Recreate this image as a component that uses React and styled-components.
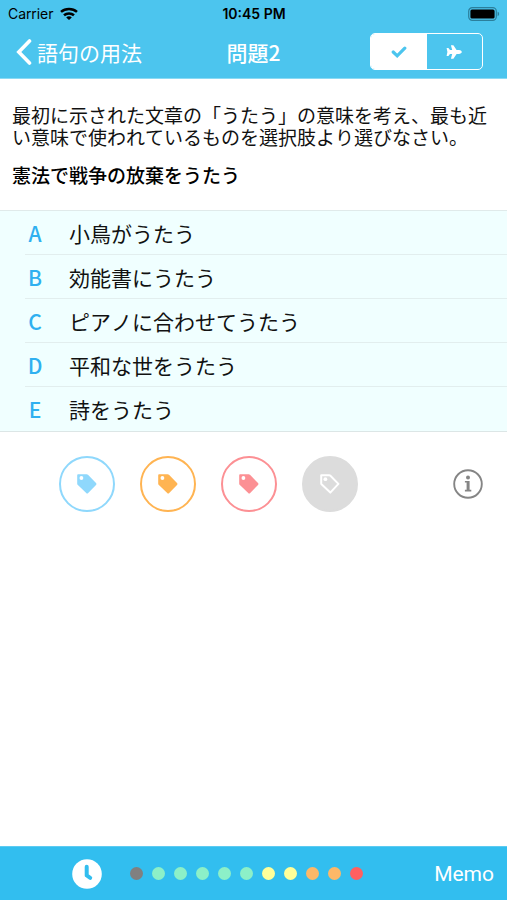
import React, { useState } from 'react';
import styled, { createGlobalStyle } from 'styled-components';

const options = [
  { letter: 'A', text: '小鳥がうたう' },
  { letter: 'B', text: '効能書にうたう' },
  { letter: 'C', text: 'ピアノに合わせてうたう' },
  { letter: 'D', text: '平和な世をうたう' },
  { letter: 'E', text: '詩をうたう' },
];

const tags = [
  { name: 'blue', color: '#8fd8fc' },
  { name: 'orange', color: '#ffb452' },
  { name: 'red', color: '#fc9094' },
];

const progress = [
  '#808080',
  '#8cf0c8',
  '#8cf0c8',
  '#8cf0c8',
  '#8cf0c8',
  '#8cf0c8',
  '#ffff99',
  '#ffff99',
  '#fcb868',
  '#fcb868',
  '#ff6060',
];

const WifiIcon = () => (
  <svg width="18" height="14" viewBox="0 0 18 14" fill="none" stroke="#000" strokeWidth="2.5">
    <path d="M1 4.9C5.4 0.9 12.6 0.9 17 4.9" />
    <path d="M4 8.3C6.8 5.8 11.2 5.8 14 8.3" />
    <path d="M9 13L6.2 10.4C7.8 9 10.2 9 11.8 10.4Z" fill="#000" stroke="none" />
  </svg>
);

const BatteryIcon = () => (
  <svg width="32" height="14" viewBox="0 0 32 14">
    <rect x="0.7" y="0.7" width="27.6" height="12.6" rx="3.6" fill="none" stroke="#2b7f9c" strokeWidth="1.2" />
    <rect x="2.4" y="2.4" width="24.2" height="9.2" rx="1.6" fill="#000" />
    <path d="M29.6 4.8C31.6 5.4 31.6 8.6 29.6 9.2Z" fill="#2b7f9c" />
  </svg>
);

const BackIcon = () => (
  <svg width="16" height="26" viewBox="0 0 16 26" fill="none" stroke="#fff" strokeWidth="3.6" strokeLinecap="round">
    <path d="M13.5 2L2.8 13L13.5 24" />
  </svg>
);

const CheckIcon = () => (
  <svg width="16" height="12" viewBox="0 0 16 12" fill="none" stroke="#4cc5ee" strokeWidth="3.2" strokeLinecap="round">
    <path d="M2.2 6L6.2 9.8L13.8 2.2" />
  </svg>
);

const PlaneIcon = () => (
  <svg width="16" height="14" viewBox="0 0 16 14" fill="#fff">
    <path d="M15.8 7C15.8 8 14.4 8.9 13 8.9H10.6L7.4 13.8H4.9L6.2 8.9H4L2.4 10.9H0.6L1.4 7L0.6 3.1H2.4L4 5.1H6.2L4.9 0.2H7.4L10.6 5.1H13C14.4 5.1 15.8 6 15.8 7Z" />
  </svg>
);

const TagIcon = ({ color }) => (
  <svg width="20" height="20" viewBox="0 0 20 20">
    <path
      d="M1.3 0.2H9.6C10.2 0.2 10.6 0.4 11 0.8L19 9C19.6 9.6 19.6 10.3 19 10.9L11.2 19C10.6 19.7 9.8 19.7 9.2 19L0.9 11.1C0.4 10.7 0.2 10.3 0.2 9.7V1.3C0.2 0.6 0.6 0.2 1.3 0.2Z"
      fill={color}
    />
    <circle cx="4.4" cy="4" r="1.9" fill="#fff" />
  </svg>
);

const TagOutlineIcon = () => (
  <svg width="20" height="20" viewBox="0 0 20 20" fill="none" stroke="#fff" strokeWidth="2" strokeLinejoin="round">
    <path d="M1.2 1.2H9.2C9.7 1.2 10 1.3 10.4 1.7L18.4 9.9L10.3 18.6L1.8 10.6C1.4 10.2 1.2 9.9 1.2 9.4Z" />
    <circle cx="5.4" cy="5.2" r="1.9" fill="#fff" stroke="none" />
  </svg>
);

const InfoIcon = () => (
  <svg width="30" height="30" viewBox="0 0 30 30">
    <circle cx="15" cy="15" r="13.8" fill="none" stroke="#858585" strokeWidth="1.9" />
    <circle cx="15" cy="8.6" r="2" fill="#858585" />
    <path d="M11.9 12H16.6V20.7H18.3V22.4H11.9V20.7H13.6V13.6H11.9Z" fill="#858585" />
  </svg>
);

const ClockIcon = () => (
  <svg width="30" height="30" viewBox="0 0 30 30">
    <circle cx="15" cy="15" r="14.8" fill="#fff" />
    <path
      d="M14.7 7.8V16.4L18.2 18.8"
      fill="none"
      stroke="#32beef"
      strokeWidth="4"
      strokeLinecap="round"
      strokeLinejoin="round"
    />
  </svg>
);

const App = () => {
  const [mode, setMode] = useState('check');

  return (
    <Page>
      <GlobalStyle />
      <Header>
        <StatusBar>
          <Carrier>
            Carrier
            <WifiIcon />
          </Carrier>
          <Time>10:45 PM</Time>
          <Battery>
            <BatteryIcon />
          </Battery>
        </StatusBar>
        <NavBar>
          <BackButton>
            <BackIcon />
            語句の用法
          </BackButton>
          <Title>問題2</Title>
          <Segments>
            <Segment aria-label="Check" $active={mode === 'check'} onClick={() => setMode('check')}>
              <CheckIcon />
            </Segment>
            <Segment aria-label="Plane" $active={mode === 'plane'} onClick={() => setMode('plane')}>
              <PlaneIcon />
            </Segment>
          </Segments>
        </NavBar>
      </Header>

      <Question>
        <Instruction>
          最初に示された文章の「うたう」の意味を考え、最も近い意味で使われているものを選択肢より選びなさい。
        </Instruction>
        <Sentence>憲法で戦争の放棄をうたう</Sentence>
      </Question>

      <OptionList>
        {options.map((option) => (
          <OptionItem key={option.letter}>
            <OptionButton>
              <Letter>{option.letter}</Letter>
              {option.text}
            </OptionButton>
          </OptionItem>
        ))}
      </OptionList>

      <TagRow>
        {tags.map((tag) => (
          <TagButton key={tag.name} aria-label={tag.name} $border={tag.color} $fill="#fff">
            <TagIcon color={tag.color} />
          </TagButton>
        ))}
        <TagButton aria-label="none" $border="#dcdcdc" $fill="#dcdcdc">
          <TagOutlineIcon />
        </TagButton>
        <InfoButton aria-label="Info">
          <InfoIcon />
        </InfoButton>
      </TagRow>

      <Footer>
        <ClockButton aria-label="Clock">
          <ClockIcon />
        </ClockButton>
        <Dots>
          {progress.map((color, index) => (
            <Dot key={index} $color={color} />
          ))}
        </Dots>
        <MemoButton>Memo</MemoButton>
      </Footer>
    </Page>
  );
};

const GlobalStyle = createGlobalStyle`
  * {
    box-sizing: border-box;
  }

  body {
    margin: 0;
    background: #fff;
    color: #111;
    font-family: 'Noto Sans CJK JP', sans-serif;
    font-kerning: none;
  }

  button {
    padding: 0;
    border: none;
    background: none;
    color: inherit;
    font: inherit;
    font-kerning: inherit;
    cursor: pointer;
  }

  svg {
    display: block;
  }
`;

const Page = styled.div`
  display: flex;
  flex-direction: column;
  min-height: 100vh;
`;

const Header = styled.header`
  background: #4cc5ee;
  border-bottom: 1px solid #8adaf4;
`;

const StatusBar = styled.div`
  display: grid;
  grid-template-columns: 1fr auto 1fr;
  align-items: center;
  height: 27px;
  padding: 0 7px 0 8px;
  color: #000;
  font-family: Inter, sans-serif;
  font-size: 14px;
`;

const Carrier = styled.div`
  display: flex;
  align-items: center;
  gap: 7px;
`;

const Time = styled.div`
  font-weight: 600;
`;

const Battery = styled.div`
  justify-self: end;
`;

const NavBar = styled.nav`
  display: grid;
  grid-template-columns: 1fr auto 1fr;
  align-items: center;
  height: 51px;
  padding: 0 16px 2px;
  color: #fff;
  font-size: 21px;
  line-height: 28px;
`;

const BackButton = styled.button`
  display: flex;
  align-items: center;
  gap: 5px;
`;

const Title = styled.h1`
  margin: 0;
  font-size: 21px;
  font-weight: 500;
`;

const Segments = styled.div`
  display: flex;
  justify-self: end;
  width: 113px;
  height: 37px;
  margin-right: 8px;
  border: 1px solid #fff;
  border-radius: 5px;
  overflow: hidden;
`;

const Segment = styled.button`
  display: flex;
  flex: 1;
  align-items: center;
  justify-content: center;
  background: ${(props) => (props.$active ? '#fff' : 'transparent')};
`;

const Question = styled.section`
  padding: 25px 12px 24px;
  font-size: 19px;
  line-height: 22px;
`;

const Instruction = styled.p`
  margin: 0 0 16px;
`;

const Sentence = styled.p`
  margin: 0;
  color: #000;
  font-weight: 500;
`;

const OptionList = styled.ul`
  margin: 0;
  padding: 0 0 0 25px;
  border-top: 1px solid #e0eaea;
  border-bottom: 1px solid #dce6e6;
  background: #f0ffff;
  list-style: none;
`;

const OptionItem = styled.li`
  border-bottom: 1px solid #e2eeee;

  &:last-child {
    border-bottom-color: transparent;
  }
`;

const OptionButton = styled.button`
  display: flex;
  align-items: center;
  width: 100%;
  height: 43px;
  font-size: 21px;
  line-height: 28px;
  text-align: left;
`;

const Letter = styled.span`
  width: 20px;
  margin-right: 24px;
  color: #2fb0f0;
  font-weight: 500;
  text-align: center;
`;

const TagRow = styled.div`
  display: flex;
  align-items: center;
  gap: 25px;
  padding: 24px 24px 0 59px;
`;

const TagButton = styled.button`
  display: flex;
  align-items: center;
  justify-content: center;
  width: 56px;
  height: 56px;
  border: 2px solid ${(props) => props.$border};
  border-radius: 50%;
  background: ${(props) => props.$fill};
`;

const InfoButton = styled.button`
  margin-left: auto;
`;

const Footer = styled.footer`
  display: flex;
  align-items: center;
  height: 54px;
  margin-top: auto;
  padding: 0 13px 0 72px;
  border-top: 1px solid #5ccbf2;
  background: #32beef;
`;

const ClockButton = styled.button`
  margin-right: 28px;
`;

const Dots = styled.div`
  display: flex;
  gap: 9px;
`;

const Dot = styled.span`
  width: 13px;
  height: 13px;
  border-radius: 50%;
  background: ${(props) => props.$color};
`;

const MemoButton = styled.button`
  margin-left: auto;
  color: #fff;
  font-family: Roboto, sans-serif;
  font-size: 21px;
`;

export default App;
